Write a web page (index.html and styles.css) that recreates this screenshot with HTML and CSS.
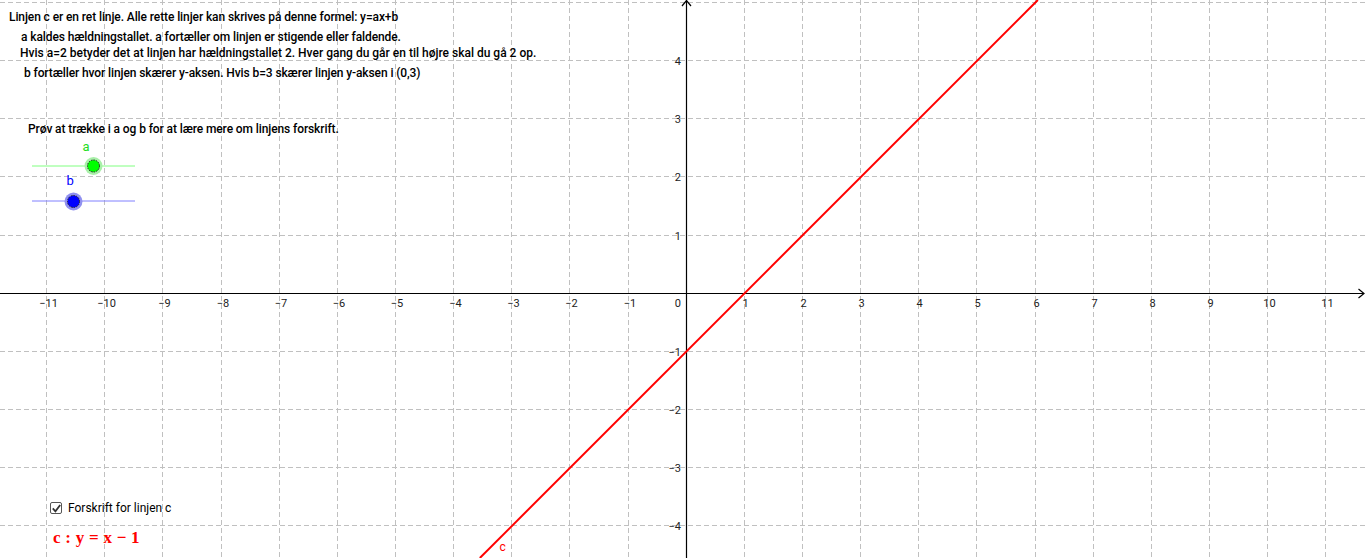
FILE: index.html
```html
<!DOCTYPE html>
<html lang="da">
<head>
<meta charset="utf-8">
<title>Linjen c</title>
<link rel="stylesheet" href="styles.css">
</head>
<body>
<div class="app">
  <svg class="graph" width="1366" height="558" viewBox="0 0 1366 558" xmlns="http://www.w3.org/2000/svg">
    <g class="grid">
      <line x1="46.5" y1="0" x2="46.5" y2="558"/>
      <line x1="104.5" y1="0" x2="104.5" y2="558"/>
      <line x1="162.5" y1="0" x2="162.5" y2="558"/>
      <line x1="221.5" y1="0" x2="221.5" y2="558"/>
      <line x1="279.5" y1="0" x2="279.5" y2="558"/>
      <line x1="337.5" y1="0" x2="337.5" y2="558"/>
      <line x1="395.5" y1="0" x2="395.5" y2="558"/>
      <line x1="453.5" y1="0" x2="453.5" y2="558"/>
      <line x1="511.5" y1="0" x2="511.5" y2="558"/>
      <line x1="569.5" y1="0" x2="569.5" y2="558"/>
      <line x1="628.5" y1="0" x2="628.5" y2="558"/>
      <line x1="744.5" y1="0" x2="744.5" y2="558"/>
      <line x1="802.5" y1="0" x2="802.5" y2="558"/>
      <line x1="860.5" y1="0" x2="860.5" y2="558"/>
      <line x1="918.5" y1="0" x2="918.5" y2="558"/>
      <line x1="976.5" y1="0" x2="976.5" y2="558"/>
      <line x1="1035.5" y1="0" x2="1035.5" y2="558"/>
      <line x1="1093.5" y1="0" x2="1093.5" y2="558"/>
      <line x1="1151.5" y1="0" x2="1151.5" y2="558"/>
      <line x1="1209.5" y1="0" x2="1209.5" y2="558"/>
      <line x1="1267.5" y1="0" x2="1267.5" y2="558"/>
      <line x1="1325.5" y1="0" x2="1325.5" y2="558"/>
      <line x1="0" y1="2.5" x2="1366" y2="2.5"/>
      <line x1="0" y1="60.5" x2="1366" y2="60.5"/>
      <line x1="0" y1="118.5" x2="1366" y2="118.5"/>
      <line x1="0" y1="176.5" x2="1366" y2="176.5"/>
      <line x1="0" y1="235.5" x2="1366" y2="235.5"/>
      <line x1="0" y1="351.5" x2="1366" y2="351.5"/>
      <line x1="0" y1="409.5" x2="1366" y2="409.5"/>
      <line x1="0" y1="467.5" x2="1366" y2="467.5"/>
      <line x1="0" y1="525.5" x2="1366" y2="525.5"/>
    </g>
    <g class="axes">
      <line x1="0" y1="293.5" x2="1364" y2="293.5"/>
      <polyline points="1358.5,289 1364,293.5 1358.5,298"/>
      <line x1="686.5" y1="558" x2="686.5" y2="0.5"/>
      <polyline points="682,6 686.5,0.5 691,6"/>
    </g>
    <g class="xlabels">
      <text x="48.5" y="307">−11</text>
      <text x="106.5" y="307">−10</text>
      <text x="164.5" y="307">−9</text>
      <text x="223" y="307">−8</text>
      <text x="281" y="307">−7</text>
      <text x="339" y="307">−6</text>
      <text x="397" y="307">−5</text>
      <text x="455.5" y="307">−4</text>
      <text x="513.5" y="307">−3</text>
      <text x="571.5" y="307">−2</text>
      <text x="630" y="307">−1</text>
      <text x="745.5" y="307">1</text>
      <text x="803.5" y="307">2</text>
      <text x="861.5" y="307">3</text>
      <text x="919.5" y="307">4</text>
      <text x="977.5" y="307">5</text>
      <text x="1036.5" y="307">6</text>
      <text x="1094.5" y="307">7</text>
      <text x="1152.5" y="307">8</text>
      <text x="1210.5" y="307">9</text>
      <text x="1269.5" y="307">10</text>
      <text x="1327.5" y="307">11</text>
    </g>
    <g class="ylabels">
      <text x="681" y="64.5">4</text>
      <text x="681" y="122.5">3</text>
      <text x="681" y="181">2</text>
      <text x="681" y="239.5">1</text>
      <text x="681" y="307">0</text>
      <text x="681" y="355.5">−1</text>
      <text x="681" y="413.5">−2</text>
      <text x="681" y="471.5">−3</text>
      <text x="681" y="529.5">−4</text>
    </g>
    <line class="fline" x1="1037.85" y1="0" x2="479.85" y2="558"/>
    <text class="flabel" x="499.5" y="551">c</text>
    <g class="slider-a">
      <line class="track" x1="32" y1="166" x2="135" y2="166"/>
      <circle class="halo" cx="93.5" cy="166" r="9"/>
      <circle class="pt" cx="93.5" cy="166" r="6"/>
      <text class="slabel" x="82.5" y="151">a</text>
    </g>
    <g class="slider-b">
      <line class="track" x1="32" y1="201" x2="135" y2="201"/>
      <circle class="halo" cx="73.5" cy="201.5" r="9"/>
      <circle class="pt" cx="73.5" cy="201.5" r="6"/>
      <text class="slabel" x="66.5" y="185">b</text>
    </g>
  </svg>

  <div class="txt t1">Linjen c er en ret linje. Alle rette linjer kan skrives på denne formel: y=ax+b</div>
  <div class="txt t2">a kaldes hældningstallet. a fortæller om linjen er stigende eller faldende.</div>
  <div class="txt t3">Hvis a=2 betyder det at linjen har hældningstallet 2. Hver gang du går en til højre skal du gå 2 op.</div>
  <div class="txt t4">b fortæller hvor linjen skærer y-aksen. Hvis b=3 skærer linjen y-aksen i (0,3)</div>
  <div class="txt t5">Prøv at trække i a og b for at lære mere om linjens forskrift.</div>

  <div class="check">
    <span class="box">
      <svg width="11" height="11" viewBox="0 0 11 11" xmlns="http://www.w3.org/2000/svg">
        <polyline points="1.8,5.4 4.4,8.3 9.2,2" fill="none" stroke="#333" stroke-width="1.8"/>
      </svg>
    </span>
    <span class="check-label">Forskrift for linjen c</span>
  </div>
  <div class="formula">c : y = x − 1</div>
</div>
</body>
</html>
```

FILE: styles.css
```css
html, body {
  margin: 0;
  padding: 0;
  background: #ffffff;
}

.app {
  position: relative;
  width: 1366px;
  height: 558px;
  overflow: hidden;
  background: #ffffff;
  font-family: Roboto, "Liberation Sans", sans-serif;
  color: #000;
}

.graph {
  position: absolute;
  left: 0;
  top: 0;
  display: block;
}

.grid line {
  stroke: #c0c0c0;
  stroke-width: 1;
  stroke-dasharray: 5 3;
}

.axes line,
.axes polyline {
  stroke: #000;
  stroke-width: 1.2;
  fill: none;
}

.xlabels text,
.ylabels text {
  font-family: Roboto, "Liberation Sans", sans-serif;
  font-size: 11px;
  fill: #222;
}

.xlabels text {
  text-anchor: middle;
}

.ylabels text {
  text-anchor: end;
}

.fline {
  stroke: #ff0000;
  stroke-width: 2;
}

.flabel {
  font-family: Roboto, "Liberation Sans", sans-serif;
  font-size: 12px;
  fill: #ff0000;
}

.slider-a .track { stroke: #80ff80; stroke-width: 1; }
.slider-a .halo { fill: #a8f0a8; }
.slider-a .pt { fill: #00ff00; stroke: #222; stroke-width: 1; stroke-dasharray: 1.5 1; }
.slider-a .slabel { fill: #22dd22; }

.slider-b .track { stroke: #8080ff; stroke-width: 1; }
.slider-b .halo { fill: #9090f0; }
.slider-b .pt { fill: #0000ff; stroke: #222; stroke-width: 1; stroke-dasharray: 1.5 1; }
.slider-b .slabel { fill: #0000ff; }

.slabel {
  font-family: Roboto, "Liberation Sans", sans-serif;
  font-size: 13px;
}

.txt {
  position: absolute;
  font-size: 12px;
  font-weight: 500;
  letter-spacing: -0.1px;
  line-height: 14px;
  white-space: nowrap;
}

.t1 { left: 9px; top: 10px; }
.t2 { left: 21px; top: 30px; }
.t3 { left: 20px; top: 46px; letter-spacing: 0; }
.t4 { left: 24px; top: 66px; }
.t5 { left: 28px; top: 122px; }

.check {
  position: absolute;
  left: 50px;
  top: 501px;
  display: flex;
  align-items: center;
  gap: 6px;
  font-size: 12px;
  line-height: 14px;
}

.box {
  display: flex;
  width: 12px;
  height: 12px;
  border: 1px solid #555;
  border-radius: 2px;
  box-sizing: border-box;
  background: #fff;
  align-items: center;
  justify-content: center;
  overflow: hidden;
}

.box svg {
  display: block;
  flex: none;
}

.formula {
  position: absolute;
  left: 53px;
  top: 528px;
  font-family: "Liberation Serif", serif;
  font-weight: bold;
  font-size: 17px;
  line-height: 20px;
  word-spacing: 0.5px;
  color: #ff0000;
  white-space: nowrap;
}
```
